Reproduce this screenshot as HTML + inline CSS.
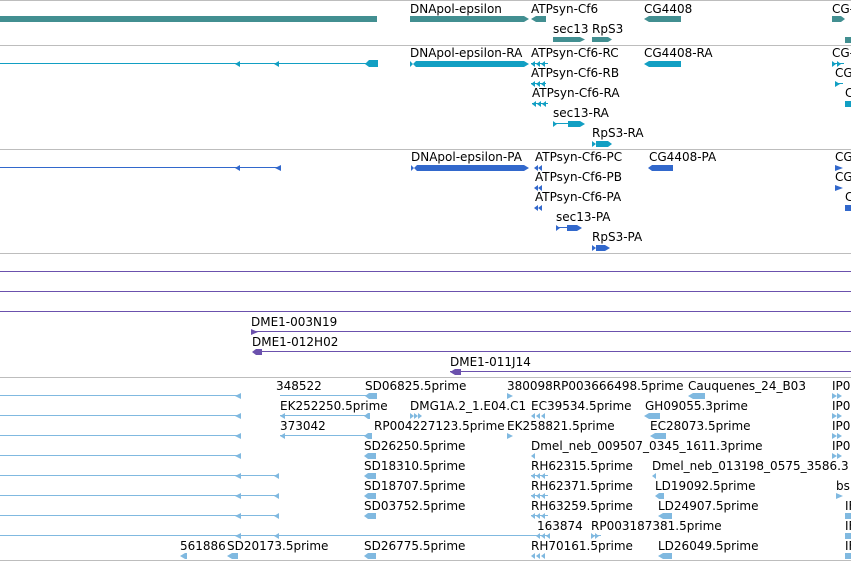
<!DOCTYPE html>
<html><head><meta charset="utf-8"><style>
html,body{margin:0;padding:0;background:#fff;width:851px;height:561px;overflow:hidden}
svg{display:block}
text{font-family:"DejaVu Sans","Liberation Sans",sans-serif;font-size:12px;fill:#000}
</style></head><body>
<svg width="851" height="561" viewBox="0 0 851 561" xmlns="http://www.w3.org/2000/svg">
<g fill="#bdbdbd">
<rect x="0" y="0" width="851" height="1"/>
<rect x="0" y="45" width="851" height="1"/>
<rect x="0" y="149" width="851" height="1"/>
<rect x="0" y="253" width="851" height="1"/>
<rect x="0" y="377" width="851" height="1"/>
<rect x="0" y="560" width="851" height="1"/>
</g>

<!-- Track 1 teal -->
<g fill="#428f91">
<rect x="0" y="16" width="377" height="6"/>
<polygon points="410,16 524,16 529,19 524,22 410,22"/>
<polygon points="531,19 536,16 546,16 546,22 536,22"/>
<polygon points="553,37 580,37 585,39.5 580,42 553,42"/>
<polygon points="592,37 608,37 612,39.5 608,42 592,42"/>
<polygon points="644,19 649,16 681,16 681,22 649,22"/>
<polygon points="832,16 841,16 845,19 841,22 832,22"/>
<rect x="845" y="37" width="6" height="6"/>
</g>
<text x="410" y="13">DNApol-epsilon</text>
<text x="531" y="13">ATPsyn-Cf6</text>
<text x="553" y="33">sec13</text>
<text x="592" y="33">RpS3</text>
<text x="644" y="13">CG4408</text>
<text x="832" y="13">CG-</text>

<!-- Track 2 cyan -->
<g fill="#129fc3" stroke="none">
<rect x="0" y="63" width="370" height="1"/>
<polygon points="235,64 240,61 240,67"/>
<polygon points="274,64 279,61 279,67"/>
<polygon points="365,64 369,60 378,60 378,67 369,67"/>
<polygon points="410,61 413,64 416,61 524,61 529,64 524,67 416,67 413,64 410,67"/>
<polygon points="531,64 535,61 535,67"/><polygon points="536,64 540,61 540,67"/><polygon points="541,64 545,61 545,67"/><rect x="531" y="63" width="17" height="1"/>
<polygon points="531,84 535,81 535,87"/><polygon points="536,84 540,81 540,87"/><polygon points="541,84 545,81 545,87"/><rect x="531" y="83" width="15" height="1"/>
<polygon points="532,104 536,101 536,107"/><polygon points="537,104 541,101 541,107"/><polygon points="542,104 546,101 546,107"/><rect x="532" y="103" width="16" height="1"/>
<polygon points="553,121 557,124 553,127"/><rect x="553" y="123" width="16" height="1"/>
<polygon points="568,121 580,121 585,124 580,127 568,127"/>
<polygon points="592,141 596,144 592,147"/><polygon points="596,141 608,141 612,144 608,147 596,147"/>
<polygon points="644,64 649,61 681,61 681,67 649,67"/>
<polygon points="832,61 836,64 832,67"/><polygon points="837,61 841,64 837,67"/><rect x="832" y="63" width="12" height="1"/>
<polygon points="835,81 840,84 835,87"/><rect x="835" y="83" width="8" height="1"/>
<rect x="845" y="101" width="6" height="6"/>
</g>
<text x="410" y="57">DNApol-epsilon-RA</text>
<text x="531" y="57">ATPsyn-Cf6-RC</text>
<text x="531" y="77">ATPsyn-Cf6-RB</text>
<text x="532" y="97">ATPsyn-Cf6-RA</text>
<text x="553" y="117">sec13-RA</text>
<text x="592" y="137">RpS3-RA</text>
<text x="644" y="57">CG4408-RA</text>
<text x="832" y="57">CG-</text>
<text x="835" y="77">CG</text>
<text x="845" y="97">C</text>

<!-- Track 3 blue -->
<g fill="#3268cc">
<rect x="0" y="167" width="280" height="1"/>
<polygon points="235,168 240,165 240,171"/>
<polygon points="275,168 281,165 281,171"/>
<polygon points="411,165 414,168 417,165 524,165 529,168 524,171 417,171 414,168 411,171"/>
<polygon points="534,168 538,165 538,171"/><polygon points="538,168 542,165 542,171"/>
<polygon points="534,188 538,185 538,191"/><polygon points="538,188 542,185 542,191"/>
<polygon points="534,208 538,205 538,211"/><polygon points="538,208 542,205 542,211"/>
<polygon points="556,225 560,228 556,231"/><rect x="556" y="227" width="12" height="1"/>
<polygon points="567,225 577,225 582,228 577,231 567,231"/>
<polygon points="592,245 596,248 592,251"/><polygon points="596,245 605,245 610,248 605,251 596,251"/>
<polygon points="648,168 652,165 673,165 673,171 652,171"/>
<polygon points="835,165 843,168 835,171"/>
<polygon points="835,185 843,188 835,191"/>
<polygon points="845,205 851,205 851,211 845,211"/>
</g>
<text x="411" y="161">DNApol-epsilon-PA</text>
<text x="535" y="161">ATPsyn-Cf6-PC</text>
<text x="535" y="181">ATPsyn-Cf6-PB</text>
<text x="535" y="201">ATPsyn-Cf6-PA</text>
<text x="556" y="221">sec13-PA</text>
<text x="592" y="241">RpS3-PA</text>
<text x="649" y="161">CG4408-PA</text>
<text x="835" y="161">CG</text>
<text x="835" y="181">CG</text>
<text x="845" y="201">C</text>

<!-- Track 4 purple -->
<g fill="#6b51ad">
<rect x="0" y="271" width="851" height="1"/>
<rect x="0" y="291" width="851" height="1"/>
<rect x="0" y="311" width="851" height="1"/>
<rect x="251" y="331" width="600" height="1"/>
<polygon points="251,329 258,332 251,335"/>
<rect x="256" y="351" width="595" height="1"/>
<polygon points="252,352 256,349 262,349 262,355 256,355"/>
<rect x="450" y="371" width="401" height="1"/>
<polygon points="450,372 455,369 461,369 461,375 455,375"/>
</g>
<text x="251" y="326">DME1-003N19</text>
<text x="252" y="346">DME1-012H02</text>
<text x="450" y="366">DME1-011J14</text>

<!-- Track 5 light blue -->
<g fill="#80b9e0">
<rect x="0" y="395" width="240" height="1"/><polygon points="235,396 241,393 241,399"/>
<rect x="280" y="395" width="90" height="1"/><polygon points="365,396 369,393 377,393 377,399 369,399"/>
<polygon points="507,393 513,396 507,399"/>
<polygon points="688,396 693,393 705,393 705,399 693,399"/>
<polygon points="832,393 837,396 832,399"/><polygon points="837,393 842,396 837,399"/>

<rect x="0" y="415" width="240" height="1"/><polygon points="235,416 241,413 241,419"/>
<rect x="280" y="415" width="90" height="1"/><polygon points="280,416 285,413 285,419"/><polygon points="364,416 368,413 370,413 370,419 368,419"/>
<polygon points="410,413 414,416 410,419"/><polygon points="414,413 418,416 414,419"/><polygon points="418,413 422,416 418,419"/>
<polygon points="531,416 535,413 535,419"/><polygon points="536,416 540,413 540,419"/><polygon points="541,416 545,413 545,419"/>
<polygon points="644,416 649,413 660,413 660,419 649,419"/>
<polygon points="832,413 837,416 832,419"/><polygon points="837,413 842,416 837,419"/>

<rect x="0" y="435" width="240" height="1"/><polygon points="235,436 241,433 241,439"/>
<rect x="280" y="435" width="90" height="1"/><polygon points="280,436 285,433 285,439"/><polygon points="364,436 368,433 372,433 372,439 368,439"/>
<polygon points="507,433 513,436 507,439"/>
<polygon points="650,436 655,433 666,433 666,439 655,439"/>
<polygon points="832,433 837,436 832,439"/><polygon points="837,433 842,436 837,439"/>

<rect x="0" y="455" width="240" height="1"/><polygon points="235,456 241,453 241,459"/>
<polygon points="364,456 368,453 376,453 376,459 368,459"/>
<polygon points="531,456 535,453 535,459"/>
<polygon points="832,453 837,456 832,459"/><polygon points="837,453 842,456 837,459"/>

<rect x="0" y="475" width="278" height="1"/><polygon points="235,476 241,473 241,479"/><polygon points="274,476 279,473 279,479"/>
<polygon points="364,476 368,473 376,473 376,479 368,479"/>
<polygon points="531,476 535,473 535,479"/><polygon points="536,476 540,473 540,479"/><polygon points="541,476 545,473 545,479"/><rect x="531" y="475" width="17" height="1"/>
<polygon points="652,476 656,473 656,479"/>

<rect x="0" y="495" width="278" height="1"/><polygon points="235,496 241,493 241,499"/><polygon points="274,496 279,493 279,499"/>
<polygon points="364,496 368,493 376,493 376,499 368,499"/>
<polygon points="531,496 535,493 535,499"/><polygon points="536,496 540,493 540,499"/><polygon points="541,496 545,493 545,499"/><rect x="531" y="495" width="17" height="1"/>
<polygon points="655,496 659,493 664,493 664,499 659,499"/>
<polygon points="836,493 843,496 836,499"/>

<rect x="0" y="515" width="278" height="1"/><polygon points="235,516 241,513 241,519"/><polygon points="274,516 279,513 279,519"/>
<polygon points="364,516 368,513 376,513 376,519 368,519"/>
<polygon points="531,516 535,513 535,519"/><polygon points="536,516 540,513 540,519"/><polygon points="541,516 545,513 545,519"/><rect x="531" y="515" width="17" height="1"/>
<polygon points="658,516 663,513 672,513 672,519 663,519"/>
<rect x="845" y="513" width="6" height="6"/>

<rect x="0" y="535" width="540" height="1"/><polygon points="235,536 241,533 241,539"/><polygon points="274,536 279,533 279,539"/>
<polygon points="536,536 540,533 540,539"/><polygon points="541,536 545,533 545,539"/><polygon points="546,536 550,533 550,539"/><rect x="536" y="535" width="14" height="1"/>
<polygon points="591,533 595,536 591,539"/><polygon points="595,533 599,536 595,539"/><rect x="591" y="535" width="10" height="1"/>
<rect x="845" y="533" width="6" height="6"/>

<polygon points="180,556 185,553 187,553 187,559 185,559"/>
<polygon points="227,556 232,553 238,553 238,559 232,559"/>
<polygon points="364,556 368,553 376,553 376,559 368,559"/>
<polygon points="531,556 535,553 535,559"/><polygon points="536,556 540,553 540,559"/><polygon points="541,556 545,553 545,559"/>
<polygon points="658,556 663,553 672,553 672,559 663,559"/>
<rect x="845" y="553" width="6" height="6"/>
</g>
<text x="276" y="390">348522</text>
<text x="365" y="390">SD06825.5prime</text>
<text x="507" y="390">380098RP003666498.5prime</text>
<text x="688" y="390">Cauquenes_24_B03</text>
<text x="832" y="390">IP0</text>
<text x="280" y="410">EK252250.5prime</text>
<text x="410" y="410">DMG1A.2_1.E04.C1</text>
<text x="531" y="410">EC39534.5prime</text>
<text x="645" y="410">GH09055.3prime</text>
<text x="832" y="410">IP0</text>
<text x="280" y="430">373042</text>
<text x="374" y="430">RP004227123.5prime</text>
<text x="507" y="430">EK258821.5prime</text>
<text x="650" y="430">EC28073.5prime</text>
<text x="832" y="430">IP0</text>
<text x="364" y="450">SD26250.5prime</text>
<text x="531" y="450">Dmel_neb_009507_0345_1611.3prime</text>
<text x="832" y="450">IP0</text>
<text x="364" y="470">SD18310.5prime</text>
<text x="531" y="470">RH62315.5prime</text>
<text x="652" y="470">Dmel_neb_013198_0575_3586.3</text>
<text x="364" y="490">SD18707.5prime</text>
<text x="531" y="490">RH62371.5prime</text>
<text x="655" y="490">LD19092.5prime</text>
<text x="836" y="490">bs</text>
<text x="364" y="510">SD03752.5prime</text>
<text x="531" y="510">RH63259.5prime</text>
<text x="658" y="510">LD24907.5prime</text>
<text x="845" y="510">IF</text>
<text x="537" y="530">163874</text>
<text x="591" y="530">RP003187381.5prime</text>
<text x="845" y="530">IF</text>
<text x="180" y="550">561886</text>
<text x="227" y="550">SD20173.5prime</text>
<text x="364" y="550">SD26775.5prime</text>
<text x="531" y="550">RH70161.5prime</text>
<text x="658" y="550">LD26049.5prime</text>
<text x="845" y="550">IF</text>
</svg>
</body></html>
